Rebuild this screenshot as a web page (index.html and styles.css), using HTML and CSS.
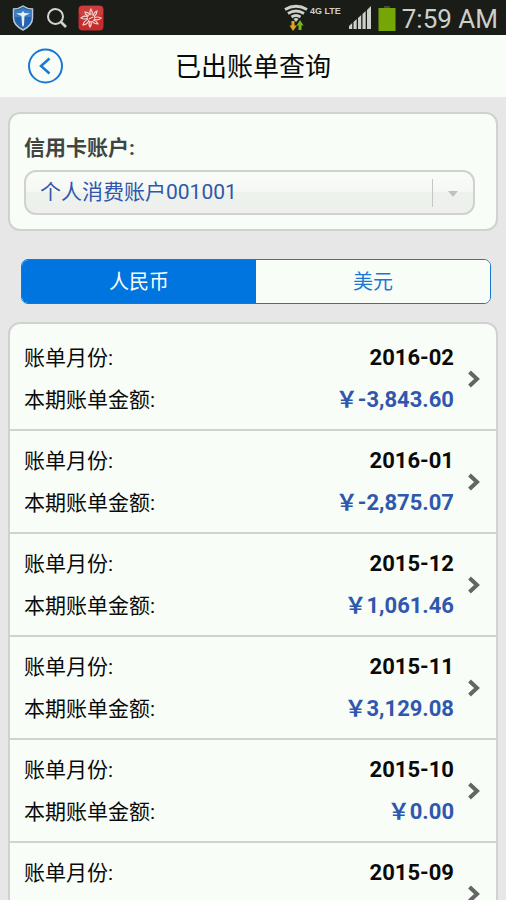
FILE: index.html
```html
<!DOCTYPE html>
<html lang="zh-CN">
<head>
<meta charset="utf-8">
<meta name="viewport" content="width=device-width, initial-scale=1">
<title>已出账单查询</title>
<link rel="stylesheet" href="styles.css">
</head>
<body>
<div class="screen">
  <div class="status">
    <div class="status-left">
      <svg width="22" height="26" viewBox="0 0 22 26" aria-hidden="true">
        <path d="M11 1C8 3 5 4 1.500 4V13C1.500 19 6 22.500 11 25C16 22.500 20.500 19 20.500 13V4C17 4 14 3 11 1Z" fill="#2463ae" stroke="#b9c9d6" stroke-width="1.500"/>
        <path d="M11 3C8.500 4.500 6 5.200 3 5.500V12H19V5.500C16 5.200 13.500 4.500 11 3Z" fill="#4f8fce" opacity=".6"/>
        <path d="M4 8.500L9.500 8L11 6L12.500 8L18 8.500L12.500 11L12 20L11 22L10 20L9.500 11Z" fill="#e6eff5"/>
      </svg>
      <svg width="22" height="22" viewBox="0 0 22 22" aria-hidden="true">
        <circle cx="9.500" cy="9.500" r="7.500" fill="none" stroke="#d2d4d0" stroke-width="2"/>
        <path d="M15 15L20 20" stroke="#d2d4d0" stroke-width="2.600"/>
      </svg>
      <svg class="app-icon" width="26" height="26" viewBox="0 0 26 26" aria-hidden="true">
        <rect x=".5" y=".5" width="25" height="25" rx="4" fill="#c42c2e"/>
        <rect x="1" y="1" width="24" height="10" rx="4" fill="#d44a48" opacity=".6"/>
        <g fill="none" stroke="#f3d3cd" stroke-width="1.200">
          <path d="M12.500 10Q11 7 13 4Q15 7 14 10"/>
          <path d="M15 11Q16 7 19 6Q19 9 16 12"/>
          <path d="M16 13Q19 11 23 13Q20 16 16 14"/>
          <path d="M15 15Q19 16 20 19Q16 19 14 16"/>
          <path d="M13 16Q14 20 12 22Q10 19 12 16"/>
          <path d="M11 15Q9 20 5 20Q6 16 10 14"/>
          <path d="M10 13Q6 15 3 13Q6 10 10 12"/>
          <path d="M11 11Q7 10 7 7Q10 7 12 10"/>
          <path d="M11 14L15 12"/>
        </g>
      </svg>
    </div>
    <div class="status-right">
      <svg width="24" height="28" viewBox="0 0 24 28" aria-hidden="true">
        <g fill="none" stroke="#cfd1cd" stroke-width="2.800">
          <path d="M1 5.500Q12 -1 23 5.500"/>
          <path d="M4 9.500Q12 4.500 20 9.500"/>
          <path d="M7.500 13Q12 10 16.500 13"/>
        </g>
        <path d="M9.500 15Q12 13 14.500 15L12 18Z" fill="#cfd1cd"/>
        <path d="M7.500 17H10.500V21.500H13L9 27L5.500 21.500H7.500Z" fill="#e0a51b"/>
        <path d="M14.500 26H17.500V21.500H19.500L16 16L12.500 21.500H14.500Z" fill="#76b51c"/>
      </svg>
      <span class="network">4G LTE</span>
      <svg class="signal" width="24" height="24" viewBox="0 0 24 24" fill="#cdcfcb" aria-hidden="true">
        <path d="M1 20L4.200 17V23H1ZM5.500 16L8.700 13V23H5.500ZM10 12L13.200 9V23H10ZM14.500 8L17.700 5V23H14.500ZM19 4L23 0V23H19Z"/>
      </svg>
      <svg width="18" height="26" viewBox="0 0 18 26" aria-hidden="true">
        <path d="M6 1H12V3H6Z" fill="#454942"/>
        <rect x=".5" y="3" width="17" height="23" fill="#76a508"/>
      </svg>
      <time class="clock">7:59 AM</time>
    </div>
  </div>

  <header class="header">
    <button class="back" type="button" aria-label="返回">
      <svg width="36" height="36" viewBox="0 0 36 36" fill="none" stroke="#1878d6" aria-hidden="true">
        <circle cx="17.500" cy="18" r="16.500" stroke-width="2"/>
        <path d="M21.500 10.500L13 18L21.500 25.500" stroke-width="2.500"/>
      </svg>
    </button>
    <h1 class="title">已出账单查询</h1>
  </header>

  <main class="content">
    <section class="account">
      <label class="account-label" for="account">信用卡账户:</label>
      <div class="select-box">
        <select class="select" id="account">
          <option>个人消费账户001001</option>
        </select>
        <svg class="select-arrow" width="10" height="6" viewBox="0 0 10 6" aria-hidden="true"><path d="M0 0H10L5 6Z" fill="#bfc1bf"/></svg>
      </div>
    </section>

    <div class="tabs">
      <button class="tab tab-active" type="button">人民币</button>
      <button class="tab" type="button">美元</button>
    </div>

    <nav class="bills">
      <a class="bill" href="#2016-02">
        <span class="lines">
          <span class="line"><span>账单月份:</span><b class="value">2016-02</b></span>
          <span class="line"><span>本期账单金额:</span><b class="value amount">&#xFFE5;-3,843.60</b></span>
        </span>
        <svg class="chevron" width="12" height="18" viewBox="0 0 12 18"><path d="M1.500 2L9 9L1.500 16"/></svg>
      </a>
      <a class="bill" href="#2016-01">
        <span class="lines">
          <span class="line"><span>账单月份:</span><b class="value">2016-01</b></span>
          <span class="line"><span>本期账单金额:</span><b class="value amount">&#xFFE5;-2,875.07</b></span>
        </span>
        <svg class="chevron" width="12" height="18" viewBox="0 0 12 18"><path d="M1.500 2L9 9L1.500 16"/></svg>
      </a>
      <a class="bill" href="#2015-12">
        <span class="lines">
          <span class="line"><span>账单月份:</span><b class="value">2015-12</b></span>
          <span class="line"><span>本期账单金额:</span><b class="value amount">&#xFFE5;1,061.46</b></span>
        </span>
        <svg class="chevron" width="12" height="18" viewBox="0 0 12 18"><path d="M1.500 2L9 9L1.500 16"/></svg>
      </a>
      <a class="bill" href="#2015-11">
        <span class="lines">
          <span class="line"><span>账单月份:</span><b class="value">2015-11</b></span>
          <span class="line"><span>本期账单金额:</span><b class="value amount">&#xFFE5;3,129.08</b></span>
        </span>
        <svg class="chevron" width="12" height="18" viewBox="0 0 12 18"><path d="M1.500 2L9 9L1.500 16"/></svg>
      </a>
      <a class="bill" href="#2015-10">
        <span class="lines">
          <span class="line"><span>账单月份:</span><b class="value">2015-10</b></span>
          <span class="line"><span>本期账单金额:</span><b class="value amount">&#xFFE5;0.00</b></span>
        </span>
        <svg class="chevron" width="12" height="18" viewBox="0 0 12 18"><path d="M1.500 2L9 9L1.500 16"/></svg>
      </a>
      <a class="bill" href="#2015-09">
        <span class="lines">
          <span class="line"><span>账单月份:</span><b class="value">2015-09</b></span>
        </span>
        <svg class="chevron" width="12" height="18" viewBox="0 0 12 18"><path d="M1.500 2L9 9L1.500 16"/></svg>
      </a>
    </nav>
  </main>
</div>
</body>
</html>
```
FILE: styles.css
```css
* {
  box-sizing: border-box;
}

body {
  margin: 0;
  background: #e7e7e7;
  color: #0a0a0a;
  font-family: Roboto, "Noto Sans CJK SC", sans-serif;
  font-size: 21px;
}

button,
select {
  font-family: inherit;
}

svg {
  display: block;
  flex: none;
}

.screen {
  height: 100vh;
  overflow: hidden;
}

.status {
  display: flex;
  align-items: center;
  justify-content: space-between;
  height: 35px;
  padding: 0 8px 0 12px;
  background: #191c17;
  color: #cdcfcb;
}

.status-left {
  display: flex;
  align-items: center;
  gap: 12px;
}

.app-icon {
  margin-left: -2px;
}

.status-right {
  display: flex;
  align-items: center;
  gap: 4px;
}

.network {
  align-self: flex-start;
  margin-left: -2px;
  padding-top: 6px;
  font-family: "Liberation Sans", sans-serif;
  font-size: 9px;
  font-weight: 700;
  line-height: 12px;
}

.signal {
  margin: 0 2px 0 3px;
}

.clock {
  font-size: 26px;
  line-height: 34px;
  padding: 3px 0 0 2px;
}

.header {
  display: grid;
  grid-template-columns: 36px 1fr 36px;
  align-items: center;
  height: 62px;
  padding: 0 28px;
  background: #f8fdf7;
}

.back {
  padding: 0;
  border: 0;
  background: none;
}

.title {
  margin: 0;
  font-size: 26px;
  font-weight: 400;
  line-height: 36px;
  padding-top: 2px;
  text-align: center;
}

.content {
  padding: 15px 8px 0;
}

.account {
  padding: 18px 21px 14px 14px;
  border: 2px solid #cfd2cf;
  border-radius: 12px;
  background: #f8fdf7;
}

.account-label {
  display: block;
  margin-bottom: 6px;
  color: #414541;
  font-weight: 700;
  line-height: 32px;
}

.select-box {
  display: flex;
  position: relative;
}

.select {
  flex: 1;
  height: 45px;
  padding: 0 54px 2px 14px;
  appearance: none;
  border: 2px solid #cfd2cf;
  border-radius: 12px;
  background: linear-gradient(#f8fcf7, #f6f7f5 50%, #edf2ec 50%, #eeefee);
  color: #2f57ad;
  font-size: 21px;
}

.select-box::after {
  content: "";
  position: absolute;
  top: 9px;
  bottom: 8px;
  right: 42px;
  width: 1px;
  background: #c4c7c4;
}

.select-arrow {
  position: absolute;
  top: 21px;
  right: 17px;
}

.tabs {
  display: flex;
  margin: 28px 7px 18px 13px;
  overflow: hidden;
  border: 1px solid #1878d0;
  border-radius: 7px;
  background: #f8fdf7;
}

.tab {
  flex: 1;
  height: 43px;
  padding: 0 0 2px;
  border: 0;
  background: #f8fdf7;
  color: #1878d6;
  font-size: 20px;
}

.tab-active {
  background: #0075e0;
  color: #f8fdf7;
}

.bills {
  padding-top: 4px;
  border: 2px solid #cfd2cf;
  border-radius: 12px;
  background: #f8fdf7;
}

.bill {
  display: flex;
  align-items: center;
  gap: 14px;
  height: 103px;
  padding: 0 16px 0 14px;
  border-bottom: 2px solid #cfd2cf;
  color: inherit;
  text-decoration: none;
}

.lines {
  flex: 1;
  height: 84px;
}

.line {
  display: flex;
  align-items: center;
  justify-content: space-between;
  line-height: 42px;
}

.value {
  font-size: 22px;
}

.amount {
  color: #2f57ad;
}

.chevron {
  fill: none;
  stroke: #636663;
  stroke-width: 4;
}
```
